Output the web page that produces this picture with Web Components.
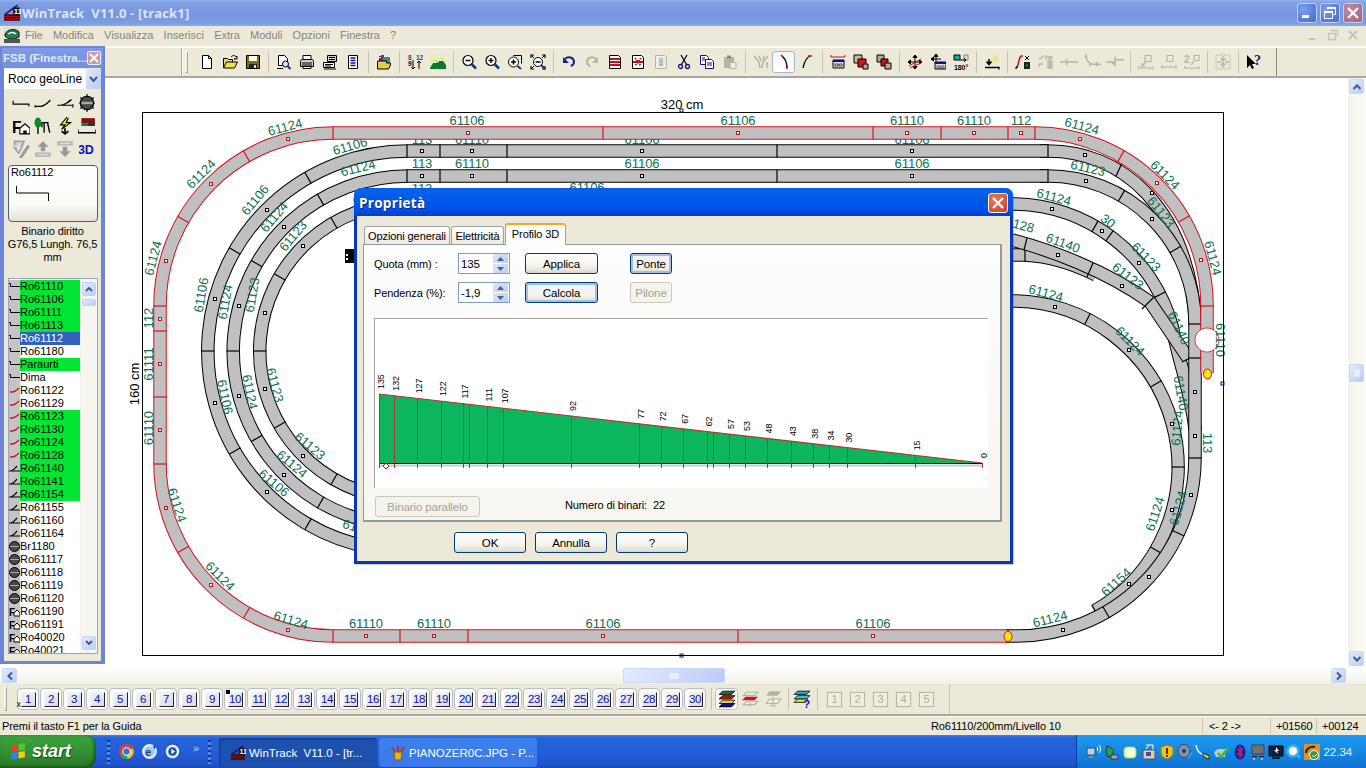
<!DOCTYPE html>
<html lang="it">
<head>
<meta charset="utf-8">
<title>WinTrack</title>
<style>
html,body{margin:0;padding:0;width:1366px;height:768px;overflow:hidden;background:#fff;font-family:"Liberation Sans",sans-serif;font-size:11px}
</style>
</head>
<body>
<wt-app>
  <wt-titlebar slot="title">WinTrack  V11.0 - [track1]</wt-titlebar>
  <wt-menubar slot="menu"></wt-menubar>
  <wt-palette slot="palette"></wt-palette>
  <wt-toolbar slot="toolbar"></wt-toolbar>
  <track-plan slot="canvas"></track-plan>
  <wt-vscroll slot="vscroll"></wt-vscroll>
  <wt-hscroll slot="hscroll"></wt-hscroll>
  <wt-layerbar slot="layerbar"></wt-layerbar>
  <wt-status slot="status"></wt-status>
  <wt-taskbar slot="taskbar"></wt-taskbar>
  <wt-dialog slot="dialog"></wt-dialog>
</wt-app>
<script>
const UI='"Liberation Sans",sans-serif';
const G='#b4b4a4';
const ICONS={
new:'<path d="M3.5 1.5h6l3 3v10h-9z" fill="#fff" stroke="#000"/><path d="M9.5 1.5v3h3" fill="none" stroke="#000"/>',
open:'<path d="M1.5 14V4.5h4l1 1h4V8" fill="#e8d860" stroke="#000"/><path d="M1.5 14l3-6h11l-3 6z" fill="#f0e050" stroke="#000"/><path d="M9 3c2-2 4-2 5 0l1-1v3h-3l1-1" fill="none" stroke="#000"/>',
save:'<path d="M1.5 1.5h13v13h-13z" fill="#807000" stroke="#000"/><path d="M4 2h8v5H4z" fill="#fff"/><path d="M4 10h8v4H4z" fill="#222"/><path d="M9 11h2v3H9z" fill="#ddd"/>',
preview:'<path d="M2.5 1.5h6l3 3v7h-9z" fill="#fff" stroke="#000"/><circle cx="9.5" cy="10" r="3" fill="#cfe6f5" stroke="#000"/><path d="M11.5 12l3 3" stroke="#003a80" stroke-width="2"/><path d="M1 14.5h6" stroke="#000"/>',
print:'<path d="M4 1.5h8v5H4z" fill="#fff" stroke="#000"/><path d="M1.5 7.5c0-2 1-2 2-2h9c1 0 2 0 2 2v5h-13z" fill="#ccc" stroke="#000"/><path d="M3 9h10M3 11h10" stroke="#000"/><path d="M4 12.5h8v2H4z" fill="#fff" stroke="#000"/>',
setup:'<path d="M5.5 1.5h9v6h-9z" fill="#ccc" stroke="#000"/><path d="M1.5 8.5h11v5h-11z" fill="#fff" stroke="#000"/><path d="M3 10.500h8M3 12h6M7 3.500h6M7 5.500h6M2 15h12" stroke="#000"/>',
list:'<path d="M3.500 1.500h9v13h-9z" fill="#fff" stroke="#000"/><path d="M5.500 4h5M5.500 6.500h5M5.500 9h5M5.500 11.500h5" stroke="#10109a" stroke-width="1.500"/>',
openx:'<path d="M3 1h5v6H3z" fill="#6a2a8a"/><path d="M7 3h7v6H7z" fill="#3a8a8a"/><path d="M1.500 15V7h9v2h4v2l-2 4z" fill="#e0d040" stroke="#000"/><path d="M3 1.500h2M3 3.500h2" stroke="#ff0"/>',
nums:'<text x="1" y="6" font-size="6.500" font-family="Liberation Sans" fill="#105090">8</text><text x="9" y="6" font-size="6.500" font-family="Liberation Sans" fill="#105090">12</text><text x="1" y="12" font-size="6.500" font-family="Liberation Sans">9</text><path d="M6 6v9M4 13l2 2 2-2M12 7v8M10 9l2-2 2 2" fill="none" stroke="#000"/>',
mount:'<path d="M0 1h16v14H0z" fill="#e8f0a8"/><path d="M0 14l5-8 3 3 3-5 5 7v4H0z" fill="#0a7a2a"/><path d="M5 6l-2 3h4zM11 4l-2 3h4z" fill="#fff"/>',
zout:'<circle cx="7" cy="6.500" r="5" fill="#fff" stroke="#000" stroke-width="1.200"/><path d="M4.500 6.500h5" stroke="#000" stroke-width="1.500"/><path d="M11 10.500l4 4" stroke="#003a90" stroke-width="2.500"/>',
zin:'<circle cx="7" cy="6.500" r="5" fill="#fff" stroke="#000" stroke-width="1.200"/><path d="M4.500 6.500h5M7 4v5" stroke="#000" stroke-width="1.500"/><path d="M11 10.500l4 4" stroke="#003a90" stroke-width="2.500"/>',
zwin:'<path d="M6.500 1.500h8v8" fill="none" stroke="#000"/><circle cx="6.500" cy="8" r="5" fill="#fff" stroke="#000"/><path d="M4 8h5M6.500 5.500v5" stroke="#000" stroke-width="1.500"/><path d="M10.500 12l3.500 3" stroke="#003a90" stroke-width="2"/>',
zfit:'<circle cx="8" cy="8" r="4.500" fill="#fff" stroke="#000"/><path d="M5.500 8h5" stroke="#000" stroke-width="1.500"/><path d="M1 4V1h3M12 1h3v3M1 12v3h3M12 15h3v-3" fill="none" stroke="#000" stroke-width="1.200"/><path d="M1 1l3 3M15 1l-3 3M1 15l3-3" stroke="#000"/><path d="M11 11l4 4" stroke="#003a90" stroke-width="2"/>',
undo:'<path d="M4 5c3-3 9-2 9 3 0 2-1 3-3 4" fill="none" stroke="#0a2a8a" stroke-width="2"/><path d="M2 3v6h6z" fill="#0a2a8a"/>',
redo:'<path d="M12 5c-3-3-9-2-9 3 0 2 1 3 3 4" fill="none" stroke="'+G+'" stroke-width="2"/><path d="M14 3v6H8z" fill="'+G+'"/>',
rpage:'<path d="M2.500 1.500h9l2 2v11h-11z" fill="#fff" stroke="#000"/><path d="M3 5h10M3 8h10M3 11h10" stroke="#c01020" stroke-width="1.800"/>',
xpage:'<path d="M2.500 1.500h9l2 2v11h-11z" fill="#fff" stroke="#000"/><path d="M3 8h10" stroke="#c01020" stroke-width="2"/><path d="M5 4l6 8M11 4l-6 8" stroke="#c01020" stroke-width="1.800" stroke-dasharray="1.500 1"/>',
gpage:'<path d="M2.500 1.500h9l2 2v11h-11z" fill="#eee" stroke="'+G+'"/><path d="M6 4h4v8H6z" fill="'+G+'"/><path d="M4 6h8M4 9h8" stroke="#ddd"/>',
cut:'<circle cx="4.500" cy="12.500" r="2" fill="none" stroke="#10108a" stroke-width="1.300"/><circle cx="11.500" cy="12.500" r="2" fill="none" stroke="#10108a" stroke-width="1.300"/><path d="M5.500 10.500L11 1M10.500 10.500L5 1" stroke="#000" stroke-width="1.200"/>',
copy:'<path d="M1.500 1.500h6l2 2v7h-8z" fill="#fff" stroke="#10108a"/><path d="M6.500 5.500h6l2 2v7h-8z" fill="#fff" stroke="#10108a"/><path d="M8 9h5M8 11h5M3 4h3M3 6h3" stroke="#10108a"/>',
paste:'<path d="M2 3h10v11H2z" fill="'+G+'"/><path d="M5 1.500h4v3H5z" fill="#888"/><path d="M8 8.500h6v6H8z" fill="#eee" stroke="'+G+'"/>',
gy:'<path d="M1 2l5 6 1 6M6 2l2 5M15 2l-5 6-1 6M11 2l-1 4M14 8v6" fill="none" stroke="'+G+'" stroke-width="1.500"/>',
cur1:'<path d="M6 2l1 1c2 2 4 6 4 11" fill="none" stroke="#000" stroke-width="1.300"/><path d="M5 1l2 2" stroke="#c01020" stroke-width="1.500"/><path d="M11 12v3" stroke="#c01020" stroke-width="1.500"/>',
cur2:'<path d="M4 14c1-4 2-10 7-12" fill="none" stroke="#000" stroke-width="1.300"/><path d="M9 2h4" stroke="#c01020" stroke-width="1.500"/>',
lbar:'<path d="M1 1v2h14V1" fill="none" stroke="#c01020"/><path d="M3 6h11v8H3z" fill="#ddd" stroke="#000"/><path d="M3 6h11v2H3z" fill="#10108a"/><path d="M5 10h3v2H5zM9 10h3v2H9z" fill="#fff" stroke="#000" stroke-width=".700"/>',
sq1:'<path d="M1 1h8v8H1z" fill="#c8b8a0" stroke="#000"/><path d="M5 5h8v8H5z" fill="#e01010" stroke="#000"/><path d="M10 10h5v5h-5z" fill="#b8a890" stroke="#000"/>',
sq2:'<path d="M1 1h7v7H1z" fill="#b8a890" stroke="#000"/><path d="M5 5h7v7H5z" fill="#c01818" stroke="#000"/><path d="M9 9h6v6H9z" fill="#b8a890" stroke="#000"/>',
move:'<path d="M8 1v14M1 8h14M8 1L6 3.500h4zM8 15l-2-2.500h4zM1 8l2.500-2v4zM15 8l-2.500-2v4z" fill="#000" stroke="#000"/><path d="M2 12l12-7M3 14l11-5" stroke="#d01020"/>',
moveb:'<path d="M6 0v10M1 5h10M6 0L4 2.500h4zM1 5l2.500-2v4z" fill="#000" stroke="#000"/><path d="M5 8h11v7H5z" fill="#ddd" stroke="#000"/><path d="M5 8h11v2H5z" fill="#10108a"/><path d="M7 12h3v2H7zM11 12h3v2h-3z" fill="#fff" stroke="#000" stroke-width=".6"/>',
rot:'<path d="M1 1h6v5H1z" fill="#10b090" stroke="#000"/><path d="M11 1h4v5h-4z" fill="#ddd" stroke="#888"/><path d="M7 6h6M11 4l2 2-2 2" fill="none" stroke="#000"/><text x="1" y="15.500" font-size="7" font-family="Liberation Sans" font-weight="bold">180°</text>',
star:'<path d="M1 13.500h14v2" fill="none" stroke="#000" stroke-width="1.300"/><path d="M5 5v5M2.500 7.500L5 10.500l2.500-3" fill="none" stroke="#000" stroke-width="1.600"/><path d="M11 1v8M7 5h8M8 2l6 6M14 2L8 8" stroke="#e8e060"/>',
reds:'<path d="M1 14c3-1 2-9 5-12h2" fill="none" stroke="#d01020" stroke-width="1.600"/><path d="M1 15v-2h2" fill="none" stroke="#000"/><path d="M9 8h6v7H9z" fill="#222"/><path d="M10 2l4 4M14 2l-4 4" stroke="#000"/><path d="M11 10h2v3h-2z" fill="#0a7a2a"/>',
g1:'<path d="M1 5c4 0 2-3 5-3M8 1v5M1 13v-3h4M10 3h4l-2 3zM10 7h4v7h-4z" fill="none" stroke="'+G+'" stroke-width="1.300"/><path d="M11 8h2v5h-2z" fill="'+G+'"/>',
g2:'<path d="M0 8h16M6 5v6" stroke="'+G+'" stroke-width="1.200"/>',
g3:'<path d="M2 2c1 4 3 7 6 8h8M3 1v4M6 9v3M12 8v4" fill="none" stroke="'+G+'" stroke-width="1.200"/>',
g4:'<path d="M0 8h8M8 6h8M8 3v8l-3-3" fill="none" stroke="'+G+'" stroke-width="1.200"/>',
g5:'<path d="M7 1.500h6v6H7zM1 14h14M1 12v3M15 12v3M8 8l-4 4v-3M4 12h3" fill="none" stroke="'+G+'" stroke-width="1.100"/>',
g6:'<path d="M6 1.500h6v6H6zM1 13h14M1 11v4M15 11v4" fill="none" stroke="'+G+'" stroke-width="1.100"/>',
g7:'<path d="M10 1.500h5v5h-5zM1 14h14M1 12v3M15 12v3M10 7l-3 4" fill="none" stroke="'+G+'" stroke-width="1.100"/><text x="0" y="9" font-size="10" font-weight="bold" font-family="Liberation Sans" fill="'+G+'">2</text>',
shrink:'<path d="M1 1h14v14H1z" fill="none" stroke="'+G+'" stroke-dasharray="1.500 1"/><path d="M8 2v4M8 10v4M2 8h4M10 8h4M5.500 4.500L8 7l2.500-2.500M5.500 11.500L8 9l2.500 2.500" fill="none" stroke="'+G+'" stroke-width="1.300"/>',
help:'<path d="M1 1v13l3-3 2 4 2-1-2-4h4z" fill="#000"/><text x="8" y="11" font-size="14" font-weight="bold" font-family="Liberation Serif" fill="#10108a">?</text>',
straight:'<path d="M1 6v3h14v2" fill="none" stroke="#000"/>',
turn:'<path d="M1 11h5c3 0 6-3 8-5" fill="none" stroke="#000"/><path d="M1 10v2M14 5v2" stroke="#000"/>',
turn2:'<path d="M1 10h14M4 10c3 0 6-2 9-5" fill="none" stroke="#000"/><path d="M10 8l4-3M15 9v3" stroke="#000"/>',
table:'<circle cx="8" cy="8" r="6" fill="#4a4a4a" stroke="#000"/><path d="M1 8h14M2 3l2 2M14 3l-2 2M2 13l2-2M14 13l-2-2M8 0v3M8 13v3" stroke="#000"/><path d="M3 8h10" stroke="#aaa" stroke-width="2"/>',
fo:'<text x="0" y="14" font-size="14" font-weight="bold" font-family="Liberation Sans">F</text><path d="M7 10l4.500-4 4.500 4v5H7z" fill="#fff" stroke="#000"/><path d="M10 12h3v3h-3z" fill="#000"/>',
tree:'<ellipse cx="3.500" cy="5" rx="3" ry="4.500" fill="#0a8a2a"/><path d="M3.500 9v6M7 5h6M9 5v9M12 5l2 9M7 5l0 4" fill="none" stroke="#000" stroke-width="1.200"/>',
bolt:'<path d="M10 0L4 7h4L5 11l8-6H9l2-4" fill="#ff0" stroke="#000"/><path d="M8 10v5M5 12.500l3 2.500 3-2.500" fill="none" stroke="#000" stroke-width="1.500"/>',
bridge:'<path d="M3 1h12v5H3z" fill="#8a1010"/><path d="M3 6h12v2H3z" fill="#0a7a4a"/><path d="M9 5h6v3H9z" fill="#333"/><path d="M0 14h16M0 11v3M16 11v3" stroke="#000" stroke-width="1.200"/>',
pen:'<path d="M2 1h9l-2 5-3 6-4-5z" fill="#bbb" stroke="#999"/><path d="M5 2l1 8M8 2L5 8M2 5l6 2" stroke="#eee"/><path d="M14 5l-6 9-1 2 2-1 6-9z" fill="#ccc" stroke="#888"/>',
up:'<path d="M8 1l-5 5h3v4h4V6h3z" fill="#999"/><path d="M1 11h14v4H1z" fill="#bbb"/><path d="M3 12h10v2H3z" fill="#ddd" stroke="#aaa" stroke-width=".5"/>',
down:'<path d="M1 1h14v4H1z" fill="#bbb"/><path d="M3 2h10v2H3z" fill="#ddd" stroke="#aaa" stroke-width=".5"/><path d="M8 15l-5-5h3V6h4v4h3z" fill="#999"/>',
d3:'<text x="-1" y="12.500" font-size="12.500" font-weight="bold" font-family="Liberation Sans" fill="#1010c0">3D</text>',
layers:'<path d="M4 1h11l-3 3H1z" fill="#0a7a2a" stroke="#000" stroke-width=".7"/><path d="M4 5h11l-3 3H1z" fill="#c01010" stroke="#000" stroke-width=".7"/><path d="M4 9h11l-3 3H1z" fill="#e8d020" stroke="#000" stroke-width=".7"/><path d="M4 12h11l-3 3H1z" fill="#1010a0" stroke="#000" stroke-width=".7"/>',
lred:'<path d="M5 2h10l-3 3H2z" fill="none" stroke="'+G+'"/><path d="M4 6h11l-3 3H1z" fill="#d81010"/><path d="M5 10h10l-3 3H2zM8 11v4" fill="none" stroke="'+G+'"/>',
lgray:'<path d="M5 1h10l-3 4H2z" fill="'+G+'"/><path d="M5 8h10l-3 4H2zM8 6v8M5 14h6" fill="none" stroke="'+G+'"/>',
lq:'<path d="M4 1h11l-3 3H1z" fill="#10b0c0" stroke="#000" stroke-width=".7"/><path d="M4 5h11l-3 3H1z" fill="#40d0d0" stroke="#000" stroke-width=".7"/><path d="M4 8h9l-2 3H1z" fill="#e8e020" stroke="#000" stroke-width=".7"/><text x="9" y="16" font-size="10" font-weight="bold" font-family="Liberation Sans" fill="#1010c0">?</text>',
chrome:'<circle cx="8" cy="8" r="7" fill="#e04030"/><path d="M8 8L2 12a7 7 0 0 0 7 3z" fill="#30a040"/><path d="M8 8l6-3a7 7 0 0 1-5 10z" fill="#f0c030"/><circle cx="8" cy="8" r="3.500" fill="#3070e0" stroke="#fff"/>',
ie:'<circle cx="8" cy="8" r="6" fill="#a0c8f0" stroke="#e0f0ff" stroke-width="2"/><path d="M11 3l3-1-1 4" fill="#30408a"/><text x="4" y="12" font-size="10" font-weight="bold" font-family="Liberation Sans" fill="#203a8a">e</text>',
media:'<circle cx="8" cy="8" r="7" fill="#dfe8f8" stroke="#2050a0"/><circle cx="8" cy="8" r="4" fill="#1a50a8"/><path d="M7 5.500v5l3.500-2.500z" fill="#fff"/>',
net:'<path d="M1 4h8v7H1z" fill="#c0d0e8" stroke="#304880"/><path d="M3 12h4v2H3z" fill="#8090a0"/><path d="M11 3c1 1 1 3 0 4M13 1c2 2 2 6 0 8" fill="none" stroke="#fff"/>',
cable:'<path d="M3 2l4 2 3 3-2 4-4 2-2-5z" fill="#30a040" stroke="#104020"/><path d="M7 11h7v4H7z" fill="#a0a0b0" stroke="#304050"/>',
leaf:'<rect x="2" y="3" width="12" height="11" rx="3" fill="#f0ffd8" stroke="#90e040"/>',
mon:'<path d="M8 1l-3 4M5 1h7v5" fill="none" stroke="#fff"/><path d="M2 6h12v9H2z" fill="#d8d0c0" stroke="#555"/><path d="M5 8h5v4H5z" fill="#405090"/>',
shield:'<path d="M8 1l6 2v6c0 3-3 5-6 6-3-1-6-3-6-6V3z" fill="#f0c020" stroke="#a08000"/><path d="M7 4h2v6H7zM7 11h2v2H7z" fill="#603000"/>',
disc:'<ellipse cx="7" cy="7" rx="6" ry="6.500" fill="#8090a8" stroke="#404a60"/><circle cx="7" cy="7" r="2" fill="#303848"/><path d="M11 14l4-5" stroke="#90b0e0"/>',
plug:'<path d="M1 1c1 6 3 9 8 10" fill="none" stroke="#fff" stroke-width="1.500"/><path d="M8 9l5 2 2 3-3 1-4-3z" fill="#c0d030" stroke="#202020"/>',
check:'<path d="M1 8l4-3h9l-2 3v5H3z" fill="#c0c8c8"/><path d="M5 9l3 4 7-9" fill="none" stroke="#30c040" stroke-width="2.500"/>',
bt:'<ellipse cx="8" cy="8" rx="5.500" ry="7.500" fill="#1020a0"/><path d="M5.500 5l5 5.500L8 13V3l2.500 2.500-5 5.500" fill="none" stroke="#e02040" stroke-width="1.200"/>',
screen:'<path d="M2 1h12v9H2z" fill="#707070" stroke="#404040"/><path d="M2 12h5v1H2zM9 12h5v1H9z" fill="#222"/><path d="M3 15h2M11 15h2" stroke="#fff"/>',
pc:'<path d="M1 2h14v10H1z" fill="#102040" stroke="#000"/><path d="M8 3l3 4H9l1 3-4-4h2z" fill="#fff"/><path d="M4 13h8v2H4z" fill="#222"/>',
q:'<circle cx="7" cy="7" r="5.500" fill="#fff" stroke="#30b0f0" stroke-width="2.500"/><path d="M10 10l4 4" stroke="#30b0f0" stroke-width="3"/>',
ok:'<path d="M0 0h16v16H0z" fill="#e09020"/><path d="M2 9c0-4 4-7 9-6" fill="none" stroke="#222" stroke-width="2"/><circle cx="10" cy="11" r="4.500" fill="#30a040" stroke="#fff"/><path d="M8 11l2 2 3-3" fill="none" stroke="#fff"/>',
flag:'<path d="M1 3l6-1.500v6L1 8.500z" fill="#f04020"/><path d="M8 1.500l6-1.500v6l-6 1.500z" fill="#60c030"/><path d="M1 9.500l6-1v6l-6 1z" fill="#3080f0"/><path d="M8 8.500l6-1v6l-6 1z" fill="#f8c820"/>',
wtlogo:'<path d="M1 9h14v6H1z" fill="#a01018"/><path d="M1 10h14M1 12h14M1 14h14" stroke="#111"/><path d="M2 9L13 1" stroke="#10108a" stroke-width="1.500"/><path d="M9 3h6v7H9z" fill="#111"/><text x="9.500" y="9" font-size="7" font-weight="bold" fill="#fff" font-family="Liberation Sans">11</text>',
wtmenu:'<path d="M0 0h16v16H0z" fill="#d8e0c8"/><path d="M1 7c3-5 10-6 14-2v5c-5 3-10 3-14-1z" fill="#2a7a5a" stroke="#111"/><path d="M4 7c3-2 6-2 8 0" fill="none" stroke="#fff" stroke-width="1.500"/><path d="M0 12h16v4H0z" fill="#555"/>',
paint:'<path d="M2 2l3 5M8 1v7M14 2l-3 5" stroke="#c03020" stroke-width="2"/><path d="M4 7h8l-1 8H5z" fill="#e8b020" stroke="#806000"/>'
};
class WtIco extends HTMLElement{
  connectedCallback(){
    if(this.shadowRoot)return;
    const s=+(this.getAttribute('size')||16);
    const n=this.getAttribute('name');
    this.attachShadow({mode:'open'}).innerHTML=`<style>:host{display:inline-flex;align-items:center;justify-content:center;width:${s}px;height:${s}px;flex:none}svg{display:block}</style><svg width="${s}" height="${s}" viewBox="0 0 16 16">${ICONS[n]||''}</svg>`;
  }
}
customElements.define('wt-ico',WtIco);

class WtApp extends HTMLElement{
  constructor(){super();this.attachShadow({mode:'open'}).innerHTML=`<style>
  :host{display:flex;flex-direction:column;position:relative;width:1366px;height:768px;overflow:hidden;background:#fff;font-family:${UI};font-size:11px;color:#000;letter-spacing:-.1px}
  .work{display:flex;height:621px;flex:none}
  .side{width:105px;flex:none;background:#fff}
  .right{flex:1;display:flex;flex-direction:column;min-width:0}
  .view{display:flex;flex:1;min-height:0}
  ::slotted([slot=dialog]){position:absolute;left:354px;top:188px}
  </style>
  <slot name="title"></slot><slot name="menu"></slot>
  <div class="work"><div class="side"><slot name="palette"></slot></div>
    <div class="right"><slot name="toolbar"></slot><div class="view"><slot name="canvas"></slot><slot name="vscroll"></slot></div></div>
  </div>
  <slot name="hscroll"></slot><slot name="layerbar"></slot><slot name="status"></slot><slot name="taskbar"></slot><slot name="dialog"></slot>`}
}
customElements.define('wt-app',WtApp);

class WtTitlebar extends HTMLElement{
  constructor(){super();this.attachShadow({mode:'open'}).innerHTML=`<style>
  :host{display:flex;align-items:center;height:26px;flex:none;box-sizing:border-box;padding:0 2px 1px 3px;background:linear-gradient(#93b1ec 0,#7f9ee3 3px,#7896dc 60%,#7b9ee2 88%,#7ab0ee 100%)}
  .t{flex:1;margin-left:1px;font:bold 13px "Open Sans","Liberation Sans",sans-serif;color:#dbe5f8;white-space:pre;letter-spacing:.15px}
  .b{width:20px;height:20px;box-sizing:border-box;border:1px solid #c4d2f2;border-radius:3px;margin-left:3px;background:radial-gradient(circle at 30% 30%,#7d9ff0,#4468d2);display:flex;align-items:center;justify-content:center}
  .c{background:radial-gradient(circle at 30% 30%,#c08aa0,#a4607c);margin-right:1px}
  </style><wt-ico name="wtlogo" size="18"></wt-ico><span class="t"><slot></slot></span>
  <div class="b"><svg width="12" height="12"><path d="M1 8h7v3H1z" fill="#fff"/></svg></div>
  <div class="b"><svg width="14" height="14"><path d="M4.500 1.500h8v7h-2M1.500 5.500h8v7h-8z" fill="none" stroke="#fff"/><path d="M4 1h9v2H4zM1 5h9v2H1z" fill="#fff"/></svg></div>
  <div class="b c"><svg width="14" height="14"><path d="M2 2l10 10M12 2L2 12" stroke="#fff" stroke-width="2.200"/></svg></div>`}
}
customElements.define('wt-titlebar',WtTitlebar);

class WtMenubar extends HTMLElement{
  constructor(){super();
    const items=['File','Modifica','Visualizza','Inserisci','Extra','Moduli','Opzioni','Finestra','?'];
    this.attachShadow({mode:'open'}).innerHTML=`<style>
    :host{display:flex;align-items:center;height:20px;flex:none;box-sizing:border-box;background:#ece9d8;padding:0 0 2px 4px;color:#85857b;font-family:${UI};font-size:11px;letter-spacing:0}
    span{margin-right:10.200px}
    .ic{width:16px;height:16px;margin-right:5px}
    .r{flex:1}
    svg{display:block;margin-right:6px}
    </style><wt-ico class="ic" name="wtmenu"></wt-ico>${items.map(i=>`<span>${i}</span>`).join('')}<div class="r"></div>
    <svg width="14" height="14"><path d="M3 10h6v2H3z" fill="#c6c3b6"/></svg>
    <svg width="14" height="14"><path d="M4.500 2.500h7v6M2.500 5.500h7v6h-7z" fill="none" stroke="#c6c3b6" stroke-width="1.300"/></svg>
    <svg width="14" height="14"><path d="M3 3l8 8M11 3l-8 8" stroke="#c6c3b6" stroke-width="2"/></svg>`;
  }
}
customElements.define('wt-menubar',WtMenubar);

const TOOLS='new open save | preview print setup list | openx | nums mount | zout zin zwin zfit | undo redo rpage xpage gpage cut copy paste | gy *cur1 cur2 | lbar sq1 sq2 | move moveb rot | star | reds g1 g2 g3 g4 | g5 g6 g7 | shrink | help'.split(' ');
class WtToolbar extends HTMLElement{
  constructor(){super();
    const html=TOOLS.map(t=>t==='|'?'<i class="sep"></i>':`<b class="btn${t[0]==='*'?' on':''}"><wt-ico name="${t.replace('*','')}" size="${/^(g2|g3|g4)$/.test(t)?18:16}"></wt-ico></b>`).join('');
    this.attachShadow({mode:'open'}).innerHTML=`<style>
    :host{display:flex;align-items:center;height:32px;flex:none;box-sizing:border-box;background:#ece9d8;border-top:2px solid #fbfaf5;border-bottom:2px solid #aca899}
    .pad{width:76px;flex:none;align-self:stretch;border-right:1px solid #aca899}
    .band{display:flex;align-items:center;align-self:stretch;border-right:1px solid #8d8a7c;box-shadow:inset 1px 0 0 #fff}
    .grip{width:3px;height:22px;margin:0 7px 0 3px;background:#ece9d8;border:1px solid;border-color:#fff #aca899 #aca899 #fff;box-sizing:border-box}
    .btn{display:flex;width:23px;height:22px;align-items:center;justify-content:center;box-sizing:border-box;border-radius:3px;border:1px solid transparent}
    .on{background:linear-gradient(#f3f4f8,#fff);border-color:#a9b8cc}
    .sep{width:8px;height:22px;display:block;background:linear-gradient(#c5c2b2,#c5c2b2) center/1px 100% no-repeat}
    .end{width:11px}
    </style><div class="pad"></div><div class="band"><div class="grip"></div>${html}<div class="end"></div></div>`;
  }
}
customElements.define('wt-toolbar',WtToolbar);

const LIST=[['Ro61110','straight',1],['Ro61106','straight',1],['Ro61111','straight',1],['Ro61113','straight',1],['Ro61112','straight',2],['Ro61180','straight',0],['Paraurti','straight',1],['Dima','straight',0],['Ro61122','c',0],['Ro61129','c',0],['Ro61123','c',1],['Ro61130','c',1],['Ro61124','c',1],['Ro61128','c',1],['Ro61140','t',1],['Ro61141','t',1],['Ro61154','t',1],['Ro61155','t',0],['Ro61160','t',0],['Ro61164','t',0],['Br1180','table',0],['Ro61117','table',0],['Ro61118','table',0],['Ro61119','table',0],['Ro61120','table',0],['Ro61190','fo',0],['Ro61191','fo',0],['Ro40020','fo',0],['Ro40021','fo',0]];
const LI={
 straight:'<path d="M0 3.500h1.500v3H11" fill="none" stroke="#000"/>',
 c:'<path d="M1 8h2c3 0 5-2 7-4" fill="none" stroke="#d01030" stroke-width="1.300"/>',
 t:'<path d="M0 9h11M2 9c3-1 4-3 6-5" fill="none" stroke="#000" stroke-width="1.200"/>',
 table:'<circle cx="5.500" cy="6.500" r="5" fill="#4a4a4a" stroke="#000"/><path d="M1 6.500h9" stroke="#aaa"/>',
 fo:'<text x="0" y="11" font-size="10" font-weight="bold" font-family="Liberation Sans">F</text><path d="M5 8l3-3 3 3v3H5z" fill="#fff" stroke="#000"/>'
};
class WtList extends HTMLElement{
  constructor(){super();
    this.attachShadow({mode:'open'}).innerHTML=`<style>
    :host{display:block;width:90px;height:376px;box-sizing:border-box;background:#fff;border:1px solid #98a5b8;overflow:hidden;position:relative;padding-top:1px;margin-left:4px}
    .rows{width:72px}
    .r{display:flex;align-items:center;height:13px;white-space:nowrap;overflow:visible;font-size:11px;line-height:13px;letter-spacing:0}
    .r svg{width:11px;height:13px;flex:none;background:#c4c4c4;margin-right:0}
    .g{background:#00e632}
    .s{background:#3161bc;color:#fff}
    .bar{position:absolute;right:0;top:0;bottom:0;width:17px;background:#f6f5ef;display:flex;flex-direction:column;padding:3px 1px;box-sizing:border-box;border-left:1px solid #f0efe8}
    .sb{width:14px;height:14px;box-sizing:border-box;border:1px solid #c3d3f6;border-radius:2px;background:linear-gradient(135deg,#e2ebfd,#b9cdf7);display:flex;align-items:center;justify-content:center}
    .th{height:7px;margin-top:3px}
    .sp{flex:1}
    </style><div class="rows">${LIST.map(i=>`<div class="r ${i[2]==1?'g':i[2]==2?'s':''}"><svg viewBox="0 0 11 13">${LI[i[1]]}</svg>${i[0]}</div>`).join('')}</div>
    <div class="bar"><div class="sb"><svg width="8" height="6"><path d="M1 5l3-3 3 3" fill="none" stroke="#3a5a8a" stroke-width="1.800"/></svg></div><div class="sb th"></div><div class="sp"></div><div class="sb"><svg width="8" height="6"><path d="M1 1l3 3 3-3" fill="none" stroke="#3a5a8a" stroke-width="1.800"/></svg></div></div>`;
  }
}
customElements.define('wt-list',WtList);

class WtPalette extends HTMLElement{
  constructor(){super();
    const ic='straight turn turn2 table fo tree bolt bridge pen up down d3'.split(' ');
    this.attachShadow({mode:'open'}).innerHTML=`<style>
    :host{display:flex;flex-direction:column;width:105px;height:618px;box-sizing:border-box;background:#ece9d8;border:solid #6d85d9;border-width:2px 4px 3px 4px;font-size:11px}
    .h{display:flex;align-items:center;height:20px;margin:0 -2px;padding:0 2px 0 1px;flex:none;background:linear-gradient(#7f9ce8,#7390e0);color:#dfe8fa;font-weight:bold;font-size:11.500px;letter-spacing:0;white-space:nowrap;overflow:hidden}
    .h span{flex:1;min-width:0;overflow:hidden}
    .x{width:14px;height:14px;box-sizing:border-box;background:#c79aa8;border:1px solid #eef;border-radius:2px;display:flex;align-items:center;justify-content:center;flex:none}
    .combo{display:flex;height:20px;flex:none;background:#fff;margin-top:1px;align-items:center;overflow:hidden;white-space:nowrap}
    .combo span{flex:1;overflow:hidden;padding-left:4px;font-size:12px;letter-spacing:0}
    .dd{width:15px;height:20px;background:linear-gradient(135deg,#dfe8fc,#b8ccf6);flex:none;display:flex;align-items:center;justify-content:center;margin-right:0}
    .grid{display:grid;grid-template-columns:repeat(4,22px);grid-auto-rows:23px;margin:2px 0 5px 6px;justify-items:center;align-items:center;flex:none}
    .pv{width:90px;height:57px;box-sizing:border-box;margin-left:4px;flex:none;border:1px solid #45617f;border-radius:4px;background:linear-gradient(#fff,#fbfbf7 70%,#e6e3d4);padding:0 2px;font-size:11px}
    .desc{text-align:center;margin:3px 0 14px;line-height:13px;width:97px;font-size:11px;flex:none;white-space:nowrap}
    svg{display:block}
    </style>
    <div class="h"><span>FSB (Finestra...</span><div class="x"><svg width="10" height="10"><path d="M1 1l8 8M9 1L1 9" stroke="#fff" stroke-width="2"/></svg></div></div>
    <div class="combo"><span>Roco geoLine H</span><div class="dd"><svg width="9" height="7"><path d="M1 1l3.500 4L8 1" fill="none" stroke="#3a5a8a" stroke-width="2"/></svg></div></div>
    <div class="grid">${ic.map(n=>`<wt-ico name="${n}" size="${n=='d3'?16:18}"></wt-ico>`).join('')}</div>
    <div class="pv">Ro61112<svg width="40" height="20" style="margin:7px 0 0 5px"><path d="M.5 1v7h32v8" fill="none" stroke="#000"/></svg></div>
    <div class="desc">Binario diritto<br>G76,5 Lungh. 76,5<br>mm</div>
    <wt-list></wt-list>`;
  }
}
customElements.define('wt-palette',WtPalette);

class TrackPlan extends HTMLElement{
  constructor(){super();
    const R=Math.PI/180,RED='#d8101c',BK='#000',GR='#c0c0c0',TX='#0a7050';
    const pt=(cx,cy,r,a)=>[cx+r*Math.cos(a*R),cy+r*Math.sin(a*R)];
    const arc=(cx,cy,r,a0,a1,mv=true)=>{const p0=pt(cx,cy,r,a0),p1=pt(cx,cy,r,a1);return `${mv?`M${p0[0].toFixed(1)} ${p0[1].toFixed(1)}`:''}A${r} ${r} 0 ${Math.abs(a1-a0)>180?1:0} ${a1>a0?1:0} ${p1[0].toFixed(1)} ${p1[1].toFixed(1)}`};
    const band=(d,c=BK)=>`<path d="${d}" fill="none" stroke="${c}" stroke-width="13.500"/><path d="${d}" fill="none" stroke="${GR}" stroke-width="11.500"/>`;
    const ln=(x1,y1,x2,y2,c=BK)=>`<line x1="${x1.toFixed(1)}" y1="${y1.toFixed(1)}" x2="${x2.toFixed(1)}" y2="${y2.toFixed(1)}" stroke="${c}" stroke-width="1.200"/>`;
    const div=(cx,cy,r,a,c=BK)=>{const p=pt(cx,cy,r-6.500,a),q=pt(cx,cy,r+6.500,a);return ln(p[0],p[1],q[0],q[1],c)};
    const vd=(x,y,c=BK)=>ln(x,y-6.500,x,y+6.500,c);
    const hd=(x,y,c=BK)=>ln(x-6.500,y,x+6.500,y,c);
    const mk=(x,y,c=BK)=>`<rect x="${(Math.round(x)-1.5).toFixed(1)}" y="${(Math.round(y)-1.5).toFixed(1)}" width="3" height="3" fill="#fff" stroke="${c}"/>`;
    const mka=(cx,cy,r,a,c=BK)=>{const p=pt(cx,cy,r,a);return mk(p[0],p[1],c)};
    const lb=(x,y,t,rot=0,col=TX)=>`<text x="${x}" y="${y}" transform="rotate(${rot} ${x} ${y})" dominant-baseline="central" text-anchor="middle" fill="${col}" font-size="13" font-family="Liberation Sans">${t}</text>`;
    let s='';
    const C=[408,351];
    const left=(r,yTop,xEnd,marks)=>{let o=band(`M${xEnd} ${yTop}H408`+arc(C[0],C[1],r,270,100,false));
      [240,210,180,150,120].forEach(a=>o+=div(C[0],C[1],r,a));
      marks.forEach(a=>o+=mka(C[0],C[1],r,a));return o};
    s+=lb(422,188,'113')+lb(587,187,'61106');
    s+=left(148,203,1012,[225,195,165,135]);
    s+=band(arc(1012,370,166,270,345)+'C1178 360 1192 395 1195 430');
    s+=div(1012,370,166,300)+div(1012,370,166,306)+div(1012,370,166,333)+mka(1012,370,166,284)+mka(1012,370,166,303)+mka(1012,370,166,320)+mk(1168,328);
    s+=band(arc(1012,467,166,270,420));
    [297,330,0,30,60].forEach(a=>s+=div(1012,467,166,a));
    [285,315,345,15,45].forEach(a=>s+=mka(1012,467,166,a));
    s+=band('M1012 255H1025C1045 256 1070 262 1096 275');
    s+=ln(1025,249,1025,262);
    s+=band('M1012 240C1050 250 1105 270 1150 302L1188 358');
    s+=ln(1027,238,1024,250)+ln(1093,263,1087,277)+ln(1154,297,1142,309)+mk(1058,255)+mk(1122,286)+ln(1182,362,1195,356);
    s+=lb(422,163,'113')+lb(472,163,'61110')+lb(642,163,'61106')+lb(912,163,'61106');
    s+=left(175,176,1048,[225,195,165,135]);
    s+=band('M1040 151H1048C1120 151 1190 205 1196 330');
    s+=ln(1122,163,1116,176)+mk(1085,155)+mk(1152,193)+mk(1189,285);
    s+=band('M1040 176H1048'+arc(1048,323,147,270,360,false)+'V458'+arc(1017,458,178,0,90,false)+'H1005');
    s+=div(1048,323,147,300)+div(1048,323,147,330)+mka(1048,323,147,285)+mka(1048,323,147,315)+hd(1195,324)+hd(1195,358)+hd(1195,458)+mk(1195,392)+mk(1195,436);
    [25,60].forEach(a=>s+=div(1017,458,178,a));
    [12,42,75].forEach(a=>s+=mka(1017,458,178,a));
    s+=vd(1048,176);
    [407,440,507,777].forEach(x=>s+=vd(x,176));
    [422,472,642,912].forEach(x=>s+=mk(x,176));
    s+=lb(422,139,'113')+lb(472,139,'61110')+lb(642,139,'61106')+lb(912,139,'61106');
    s+=left(200,151,1048,[225,195,165,135]);
    [407,440,507,777,1048].forEach(x=>s+=vd(x,151));
    [422,472,642,912].forEach(x=>s+=mk(x,151));
    s+=lb(350,146,'61106',-16);
    s+=lb(358,168,'61124',-14)+lb(255,200,'61106',-50)+lb(274,217,'61124',-50)+lb(293,236,'61123',-50);
    s+=lb(201,295,'61106',-80)+lb(225,302,'61124',-80)+lb(252,295,'61123',-80);
    s+=lb(225,397,'61106',78)+lb(250,392,'61124',78)+lb(275,385,'61123',75);
    s+=lb(310,446,'61123',40)+lb(292,464,'61124',40)+lb(274,483,'61106',40);
    s+=lb(360,528,'61106',15)+lb(370,197,'61123',-16);
    s+=`<rect x="345" y="249" width="10" height="14" fill="#000"/><rect x="346" y="254" width="2" height="2" fill="#fff"/><rect x="346" y="258" width="2" height="2" fill="#fff"/>`;
    const redD='M1207 373V305'+arc(1035,305,172,0,-90,false)+'H333'+arc(333,306,173,270,180,false)+'V463'+arc(333,463,173,180,90,false)+'H1008';
    s+=band(redD,RED);
    [333,603,873,941,1008,1035].forEach(x=>s+=vd(x,133,RED));
    [333,400,468,738,1008].forEach(x=>s+=vd(x,636,RED));
    [306,331,397,464].forEach(y=>s+=hd(160,y,RED));
    [240,210].forEach(a=>s+=div(333,306,173,a,RED));
    [120,150].forEach(a=>s+=div(333,463,173,a,RED));
    [300,330].forEach(a=>s+=div(1035,305,172,a,RED));
    s+=hd(1207,306,RED);
    [468,738,907,974,1021].forEach(x=>s+=mk(x,133,RED));
    [366,434,603,873].forEach(x=>s+=mk(x,636,RED));
    [319,364,430].forEach(y=>s+=mk(160,y,RED));
    [255,225,195].forEach(a=>s+=mka(333,306,173,a,RED));
    [105,135,165].forEach(a=>s+=mka(333,463,173,a,RED));
    [285,315,345].forEach(a=>s+=mka(1035,305,172,a,RED));
    [[467,120,'61106'],[738,120,'61106'],[907,120,'61110'],[974,120,'61110'],[1021,120,'112']].forEach(a=>s+=lb(a[0],a[1],a[2]));
    [[366,623,'61110'],[434,623,'61110'],[603,623,'61106'],[873,623,'61106']].forEach(a=>s+=lb(a[0],a[1],a[2]));
    [[148,318,'112'],[148,364,'61111'],[148,428,'61110']].forEach(a=>s+=lb(a[0],a[1],a[2],-90));
    s+=lb(285,127,'61124',-15)+lb(201,174,'61124',-45)+lb(153,258,'61124',-75);
    s+=lb(177,505,'61124',72)+lb(220,576,'61124',45)+lb(291,620,'61124',17);
    s+=lb(1082,126,'61124',15)+lb(1165,175,'61124',45)+lb(1213,258,'61124',75);
    s+=`<circle cx="1207" cy="340" r="12" fill="#fff" stroke="${RED}" stroke-dasharray="3 .6"/><ellipse cx="1207.500" cy="374" rx="4" ry="5" fill="#ffe800" stroke="${RED}"/><ellipse cx="1008" cy="636.500" rx="4" ry="5" fill="#ffe800" stroke="${RED}"/>`;
    s+=lb(1088,168,'61123',13)+lb(1161,212,'61123',52)+lb(1054,197,'61124',15)+lb(1108,221,'30',37)+lb(1146,257,'61123',45)+lb(1063,243,'61140',20)+lb(1128,276,'61123',38)+lb(1046,293,'61124',15)+lb(1130,341,'61124',45)+lb(1179,328,'61140',65)+lb(1220,340,'61110',90);
    s+=lb(1181,393,'61140',80)+lb(1177,428,'61124',-85)+lb(1207,443,'113',90)+lb(1155,514,'61124',-72)+lb(1178,508,'61124',-75)+lb(1116,582,'61154',-42)+lb(1050,619,'61124',-14)+lb(1017,224,'61128',15);
    s+=`<rect x="142.500" y="112.500" width="1081" height="543" fill="none" stroke="#000"/>`;
    s+=`<rect x="680" y="109" width="3" height="3" fill="none" stroke="#10108a"/><rect x="680" y="654" width="3" height="3" fill="none" stroke="#10108a"/><rect x="1221" y="382" width="3" height="3" fill="none" stroke="#10108a"/>`;
    s+=lb(682,104,'320 cm',0,'#000')+lb(134,384,'160 cm',-90,'#000');
    this.attachShadow({mode:'open'}).innerHTML=`<style>:host{display:block;width:1243px;height:589px;background:#fff;flex:none;overflow:hidden;letter-spacing:0}svg{display:block}</style><svg width="1243" height="589" viewBox="105 78 1243 589">${s}</svg>`;
  }
}
customElements.define('track-plan',TrackPlan);

const SBTN=d=>`<div class="sb"><svg width="10" height="10"><path d="${{u:'M1.500 7L5 3.500 8.500 7',d:'M1.500 3L5 6.500 8.500 3',l:'M7 1.500L3.500 5 7 8.500',r:'M3 1.500L6.500 5 3 8.500'}[d]}" fill="none" stroke="#3a5a8a" stroke-width="2"/></svg></div>`;
const SBCSS=`.sb{width:15px;height:15px;flex:none;box-sizing:border-box;border:1px solid #c8d8f8;border-radius:2px;background:linear-gradient(135deg,#e4ecfd,#b8ccf6);display:flex;align-items:center;justify-content:center}`;
class WtVscroll extends HTMLElement{
  constructor(){super();this.attachShadow({mode:'open'}).innerHTML=`<style>
  :host{display:flex;flex-direction:column;width:18px;height:589px;flex:none;box-sizing:border-box;padding:1px 2px 1px 1px;background:linear-gradient(90deg,#f4f3ec,#fbfbf6)}${SBCSS}
  .sp{height:270px;flex:none}.th{height:18px}.e{flex:1}
  </style>${SBTN('u')}<div class="sp"></div><div class="sb th"><svg width="8" height="8"><path d="M1 1h6M1 3h6M1 5h6M1 7h6" stroke="#fff"/></svg></div><div class="e"></div>${SBTN('d')}`}
}
customElements.define('wt-vscroll',WtVscroll);
class WtHscroll extends HTMLElement{
  constructor(){super();this.attachShadow({mode:'open'}).innerHTML=`<style>
  :host{display:flex;align-items:center;height:17px;flex:none;box-sizing:border-box;padding:0 20px 0 2px;background:linear-gradient(#fff,#f2f1e8)}${SBCSS}
  .sp{width:606px;flex:none}.th{width:102px}.e{flex:1}
  </style>${SBTN('l')}<div class="sp"></div><div class="sb th"><svg width="10" height="8"><path d="M1 1v6M3 1v6M5 1v6M7 1v6M9 1v6" stroke="#fff"/></svg></div><div class="e"></div>${SBTN('r')}`}
}
customElements.define('wt-hscroll',WtHscroll);

class WtLayerbar extends HTMLElement{
  constructor(){super();
    let nums='';
    for(let i=1;i<=30;i++){nums+=`<div class="o"><div class="n${i==1?' one':''}${i==10?' ten':''}">${i}</div></div>`}
    this.attachShadow({mode:'open'}).innerHTML=`<style>
    :host{display:flex;align-items:center;height:32px;flex:none;box-sizing:border-box;background:#ece9d8;border-bottom:2px solid #aca899;padding-left:4px;font-size:12px}
    .grip{width:3px;height:24px;margin-right:10px;box-sizing:border-box;border:1px solid;border-color:#fff #aca899 #aca899 #fff}
    .o{width:22px;height:22px;margin-right:1px;box-sizing:border-box;border:1px solid #b5bfc8;border-radius:4px;background:#fbfbf8;display:flex;align-items:center;justify-content:center;flex:none}
    .n{width:15px;height:15px;box-sizing:border-box;position:relative;text-align:center;line-height:13px;color:#1212a4;background:linear-gradient(135deg,#f0f2f6,#d5dce8);border:1px solid;border-color:#f4f4f4 #222 #222 #f4f4f4;font-size:11.500px;letter-spacing:-.5px;white-space:nowrap}
    .one::before{content:"x";position:absolute;left:-5px;bottom:-3px;font-size:9px;color:#000;line-height:9px}
    .ten::before{content:"";position:absolute;left:-3px;top:-3px;width:4px;height:4px;background:#000}
    .sep{width:8px;height:22px;margin:0;background:linear-gradient(#c5c2b2,#c5c2b2) center/1px 100% no-repeat;flex:none}
    .i{display:flex;width:23px;height:22px;align-items:center;justify-content:center;box-sizing:border-box;flex:none;border-radius:4px}
    .on{border:1px solid #b5bfc8;background:#fff}
    .d{width:15px;height:15px;box-sizing:border-box;border:1px solid #b8b6a6;outline:1px solid #e6e3d5;text-align:center;line-height:13px;font-size:11px;color:#b0ae9e;background:#efede0;margin:0 4px;flex:none}
    .end{width:1px;height:30px;background:#c5c2b2;margin-left:11px}
    </style><div class="grip"></div>${nums}<div class="sep"></div><div class="i on"><wt-ico name="layers" size="18"></wt-ico></div><div class="i"><wt-ico name="lred" size="18"></wt-ico></div><div class="i"><wt-ico name="lgray" size="18"></wt-ico></div><div class="sep" style="margin-right:-2px"></div><div class="i"><wt-ico name="lq" size="18"></wt-ico></div><div class="sep" style="margin-right:2px"></div>${[1,2,3,4,5].map(n=>`<div class="d">${n}</div>`).join('')}<div class="end"></div>`;
  }
}
customElements.define('wt-layerbar',WtLayerbar);

class WtStatus extends HTMLElement{
  constructor(){super();this.attachShadow({mode:'open'}).innerHTML=`<style>
  :host{display:flex;align-items:center;height:19px;flex:none;background:#ece9d8;font-size:11px;border-top:1px solid #fdfcf6;padding-bottom:1px;box-sizing:border-box;white-space:nowrap}
  .m{width:929px;padding-left:2px;box-sizing:border-box;flex:none}
  .s{width:273px;flex:none;padding-left:2px;box-sizing:border-box}
  .p{border-left:1px solid #c9c6b6;height:16px;line-height:16px;box-sizing:border-box;padding-left:5px;flex:none}
  </style><div class="m">Premi il tasto F1 per la Guida</div><div class="s">Ro61110/200mm/Livello 10</div><div class="p" style="width:68px;padding-left:6px">&lt;- 2 -&gt;</div><div class="p" style="width:46px">+01560</div><div class="p" style="width:46px">+00124</div>`}
}
customElements.define('wt-status',WtStatus);

class WtTaskbar extends HTMLElement{
  constructor(){super();
    const tray='net cable leaf mon shield disc plug check bt screen pc q ok'.split(' ');
    this.attachShadow({mode:'open'}).innerHTML=`<style>
    :host{display:flex;align-items:stretch;height:33px;flex:none;box-sizing:border-box;background:linear-gradient(#3d82f0 0,#2563d8 3px,#245edb 50%,#1f54c8 90%,#1a48b0 100%);color:#fff;font-size:11.500px;overflow:hidden;letter-spacing:0}
    .start{width:96px;display:flex;align-items:center;gap:5px;padding-left:10px;box-sizing:border-box;flex:none;background:linear-gradient(#3f9a3f 0,#3aa13a 12%,#308d30 60%,#267426 100%);border-radius:0 10px 10px 0;box-shadow:inset -2px -1px 3px rgba(0,40,0,.5)}
    .start span{font:italic bold 18px "Liberation Sans",sans-serif;text-shadow:1px 1px 1px #1a4a1a}
    .ql{display:flex;align-items:center;width:123px;flex:none;box-sizing:border-box;padding-left:11px}
    .dot{width:3px;height:24px;background:repeating-linear-gradient(#16338a 0 2px,#4d8af0 2px 5px);flex:none}
    .ql wt-ico{margin:0 3px}
    .ql .dot+wt-ico{margin-left:8px}
    .more{font-size:11px;color:#bcd3f8;margin:-8px 0 0 9px;letter-spacing:-1px}
    .ql .dot:last-child{margin-left:auto;margin-right:8px}
    .task{width:158px;margin:3px 2px 1px 0;display:flex;align-items:center;gap:3px;padding-left:11px;box-sizing:border-box;flex:none;border-radius:3px;white-space:pre}
    .a{background:#1e50b0;box-shadow:inset 1px 1px 2px #123a88}
    .b{background:linear-gradient(#3c80ee,#3a78e8)}
    .sp{flex:1}
    .tray{display:flex;align-items:center;box-sizing:border-box;padding-left:9px;flex:none;background:linear-gradient(#1f9af0 0,#1488e4 50%,#1070d0 100%);border-left:1px solid #0a3f9c;gap:2.200px;width:290px}
    .clk{margin-left:1px;color:#e8f2ff;font-size:11.500px}
    </style><div class="start"><wt-ico name="flag" size="17"></wt-ico><span>start</span></div>
    <div class="ql"><div class="dot"></div><wt-ico name="chrome" size="17"></wt-ico><wt-ico name="ie" size="17"></wt-ico><wt-ico name="media" size="17"></wt-ico><div class="more">»</div><div class="dot"></div></div>
    <div class="task a"><wt-ico name="wtlogo" size="16"></wt-ico>WinTrack  V11.0 - [tr...</div><div class="task b"><wt-ico name="paint" size="16"></wt-ico>PIANOZER0C.JPG - P...</div><div class="sp"></div>
    <div class="tray">${tray.map(n=>`<wt-ico name="${n}" size="16"></wt-ico>`).join('')}<span class="clk">22.34</span></div>`;
  }
}
customElements.define('wt-taskbar',WtTaskbar);

class XpBtn extends HTMLElement{
  constructor(){super();this.attachShadow({mode:'open'}).innerHTML=`<style>
  :host{display:flex;align-items:center;justify-content:center;box-sizing:border-box;height:21px;flex:none;border:1px solid #003c74;border-radius:3px;background:linear-gradient(#fff,#f5f4ee 60%,#e4e1d6 90%,#d6d0c5);font-size:11.500px;color:#000;white-space:nowrap}
  :host([focus]){box-shadow:inset 0 0 0 2px #a5bde9;background:linear-gradient(#eef3fb,#f5f4ee 60%,#e0dfd6)}
  :host([disabled]){border-color:#cac8bb;background:#f4f3ec;color:#a5a294}
  </style><slot></slot>`}
}
customElements.define('xp-btn',XpBtn);

class XpSpin extends HTMLElement{
  constructor(){super();this.attachShadow({mode:'open'}).innerHTML=`<style>
  :host{display:flex;align-items:center;box-sizing:border-box;width:52px;height:21px;border:1px solid #7f9db9;background:#fff;font-size:11.500px;padding-left:2px;flex:none}
  .t{flex:1}
  .s{width:15px;height:19px;display:flex;flex-direction:column;gap:1px;margin-right:1px}
  .s div{flex:1;background:linear-gradient(135deg,#dbe6fb,#b9cdf5);display:flex;align-items:center;justify-content:center}
  </style><span class="t"><slot></slot></span><div class="s"><div><svg width="7" height="4"><path d="M3.500 0L7 4H0z" fill="#4d6185"/></svg></div><div><svg width="7" height="4"><path d="M0 0h7L3.500 4z" fill="#4d6185"/></svg></div></div>`}
}
customElements.define('xp-spin',XpSpin);

class WtProfile extends HTMLElement{
  constructor(){super();
    const d=[[379,135],[394,132],[417,127],[441,122],[463,117],[469,''],[487,111],[503,107],[571,92],[639,77],[661,72],[683,67],[707,62],[713,''],[729,57],[745,53],[767,48],[791,43],[813,38],[829,34],[847,30],[915,15],[982,0]];
    const Y=x=>394+(x-379)*69/603;
    let s=`<polygon points="379,394 982,463 379,463" fill="#0cb65c"/>`;
    s+=`<path d="M379 465.500H982" stroke="#c8c8c8" stroke-width="2"/><path d="M379 463.500H982" stroke="#000"/><path d="M379 394L982 463" stroke="#c03030" stroke-width="1.200"/>`;
    d.forEach(p=>{const y=Y(p[0]);s+=`<path d="M${p[0]+.5} ${y.toFixed(1)}V468" stroke="#b8303a"/>`;
      if(p[1]!=='')s+=`<text transform="translate(${p[0]+4.500} ${(y-5).toFixed(1)}) rotate(-90)" font-size="9" font-family="Liberation Sans" fill="#000">${p[1]}</text>`});
    s+=`<path d="M386 463l3 3-3 3-3-3z" fill="#fff" stroke="#c01010"/>`;
    this.attachShadow({mode:'open'}).innerHTML=`<style>:host{display:block;width:614px;height:170px;box-sizing:border-box;background:#fff;border-top:1px solid #a6a59a;border-left:1px solid #a6a59a;overflow:hidden;flex:none}svg{display:block;margin:-1px 0 0 -1px}</style><svg width="614" height="170" viewBox="374 318 614 170">${s}</svg>`;
  }
}
customElements.define('wt-profile',WtProfile);

class WtDialog extends HTMLElement{
  constructor(){super();this.attachShadow({mode:'open'}).innerHTML=`<style>
  :host{display:flex;flex-direction:column;width:659px;height:376px;box-sizing:border-box;background:#ece9d8;border:3px solid #0a35b8;border-top:none;border-radius:8px 8px 0 0;font-size:11px;color:#000;box-shadow:1px 1px 1px rgba(0,0,0,.2)}
  .tb{display:flex;align-items:center;justify-content:space-between;box-sizing:border-box;height:28px;margin:0 -3px;padding:2px 5px 0;flex:none;border-radius:8px 8px 0 0;background:linear-gradient(#0a5ae0 0,#0462ee 12%,#0058e4 40%,#0352ea 75%,#0140c8 100%)}
  .tt{font:bold 13.500px "Open Sans","Liberation Sans",sans-serif;color:#fff;text-shadow:1px 1px 0 #0a2a8a;letter-spacing:.3px}
  .x{width:20px;height:20px;box-sizing:border-box;border:1px solid #fff;border-radius:3px;background:radial-gradient(circle at 35% 30%,#ea7a5a,#cf4026);display:flex;align-items:center;justify-content:center}
  .tabs{display:flex;align-items:flex-end;height:22px;margin:6px 0 0 6px;padding-left:1px;flex:none;position:relative;z-index:1;gap:1px}
  .tab{display:flex;align-items:center;justify-content:center;height:18px;box-sizing:border-box;border:1px solid #9ba5a6;border-bottom:none;border-radius:3px 3px 0 0;background:linear-gradient(#fff,#ece9e0);white-space:nowrap;margin-bottom:0}
  .tab.on{height:22px;background:#fdfdfc;margin-bottom:-1px;border-top:2px solid #f6a82a;padding-bottom:3px;margin-left:0}
  .pane{width:639px;height:278px;margin-left:6px;box-sizing:border-box;border:1px solid #919b9c;border-right-width:2px;border-bottom-width:2px;background:linear-gradient(#fdfdfe,#f7f6f1);padding:8px 0 0 10px;display:flex;flex-direction:column;flex:none}
  .row{display:flex;align-items:center;height:21px;flex:none}
  .lab{width:84px;flex:none;white-space:nowrap}
  .row2{margin-top:8px}
  .pr{margin-top:15px}
  .bot{display:flex;align-items:center;height:21px;margin-top:8px;flex:none}
  .foot{display:flex;margin:10px 0 0 97px;gap:9px;flex:none}
  </style>
  <div class="tb"><span class="tt">Proprietà</span><div class="x"><svg width="14" height="14"><path d="M2 2l10 10M12 2L2 12" stroke="#fff" stroke-width="2.200"/></svg></div></div>
  <div class="tabs"><div class="tab" style="width:86px">Opzioni generali</div><div class="tab" style="width:53px">Elettricità</div><div class="tab on" style="width:61px">Profilo 3D</div></div>
  <div class="pane">
    <div class="row"><span class="lab">Quota (mm) :</span><xp-spin>135</xp-spin><xp-btn style="width:73px;margin-left:15px">Applica</xp-btn><xp-btn focus style="width:42px;margin-left:32px">Ponte</xp-btn></div>
    <div class="row row2"><span class="lab">Pendenza (%):</span><xp-spin>-1,9</xp-spin><xp-btn focus style="width:73px;margin-left:15px">Calcola</xp-btn><xp-btn disabled style="width:42px;margin-left:32px">Pilone</xp-btn></div>
    <wt-profile class="pr"></wt-profile>
    <div class="bot"><xp-btn disabled style="width:105px;margin-left:1px">Binario parallelo</xp-btn><span style="margin:-4px 0 0 85px;white-space:pre">Numero di binari:  22</span></div>
  </div>
  <div class="foot"><xp-btn style="width:72px">OK</xp-btn><xp-btn style="width:72px">Annulla</xp-btn><xp-btn style="width:72px">?</xp-btn></div>`}
}
customElements.define('wt-dialog',WtDialog);
</script>
</body>
</html>
